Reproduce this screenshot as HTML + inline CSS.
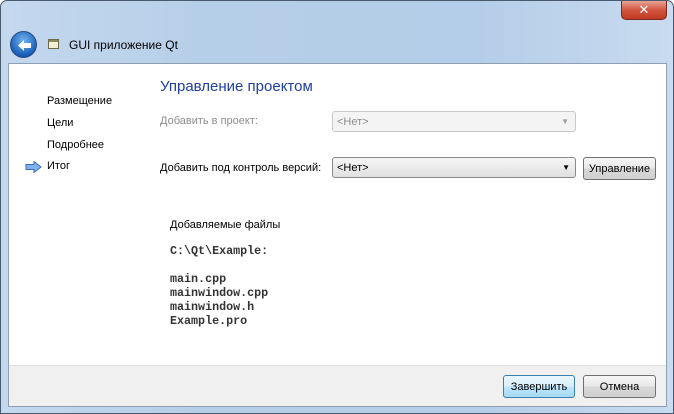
<!DOCTYPE html>
<html><head><meta charset="utf-8"><style>
*{margin:0;padding:0;box-sizing:border-box}
body{width:674px;height:414px;overflow:hidden;background:#fff;font-family:"Liberation Sans","DejaVu Sans",sans-serif;font-size:11px;color:#000}
.win{position:absolute;left:0;top:0;width:674px;height:414px;border:1px solid #4a5a6e;border-radius:7px 7px 0 0;background:linear-gradient(90deg,#c4d8ee 0%,#b6cfe8 30%,#b4cde8 70%,#c8dbef 100%)}
.close{position:absolute;left:620px;top:0;width:46px;height:19px;border:1px solid #7a2a20;border-top:none;border-radius:0 0 5px 5px;background:linear-gradient(#e8a494,#d2553f 50%,#c03a22);color:#fff;font-weight:bold;font-size:13px;text-align:center;line-height:18px}
.back{position:absolute;left:9px;top:30px;width:27px;height:27px;border-radius:50%;background:radial-gradient(circle at 50% 35%,#6fb4f0,#1a5fb8 70%,#0d3e86);border:1px solid #274a80}
.ico{position:absolute;left:47px;top:38px;width:11px;height:10px;border:1px solid #6b6b4a;background:#f4f0d8}
.ico:before{content:"";position:absolute;left:0;top:0;right:0;height:2px;background:#8d8a54}
.title{position:absolute;left:68px;top:37px;font-size:12px;color:#000}
.content{position:absolute;left:7px;top:62px;width:659px;height:344px;background:#fff;border:1px solid #8e9fb4}
.foot{position:absolute;left:0;bottom:0;width:100%;height:41px;background:#f0f0f0;border-top:1px solid #dfdfdf}
.side{position:absolute;left:47px;font-size:11px}
.h{position:absolute;left:160px;top:78px;font-size:15px;color:#1e3f9c}
.lbl{position:absolute;font-size:11px}
.combo{position:absolute;height:21px;border:1px solid #8a8a8a;border-radius:3px;background:linear-gradient(#f6f6f6,#e0e0e0);padding-left:4px;line-height:20px;font-size:11px}
.btn{position:absolute;height:23px;border:1px solid #707070;border-radius:3px;background:linear-gradient(#f6f6f6 0%,#e8e8e8 50%,#d8d8d8 51%,#d0d0d0);text-align:center;line-height:22px;font-size:11px}
.mono{position:absolute;left:170px;font-family:"Liberation Mono",monospace;font-size:11.7px;font-weight:bold;color:#333;line-height:14px}
</style></head><body>
<div class="win">
<div class="close">✕</div>
<div class="back"><svg width="27" height="27" viewBox="0 0 27 27"><path d="M7 13.5 L13 8 L13 11 L20 11 L20 16 L13 16 L13 19 Z" fill="#fff"/></svg></div>
<div class="ico"></div>
<div class="title">GUI приложение Qt</div>
<div class="content"><div class="foot"></div></div>
</div>
<div class="side" style="top:95px">Размещение</div>
<div class="side" style="top:117px">Цели</div>
<div class="side" style="top:139px">Подробнее</div>
<div class="side" style="top:160px">Итог</div>
<svg style="position:absolute;left:25px;top:161px" width="17" height="12" viewBox="0 0 17 12"><path d="M1 3.5 H9 V0.5 L16 6 L9 11.5 V8.5 H1 Z" fill="#7fb2ea" stroke="#3a6fb8"/></svg>
<div class="h">Управление проектом</div>
<div class="lbl" style="left:160px;top:115px;color:#8d8d8d">Добавить в проект:</div>
<div class="combo" style="left:332px;top:111px;width:244px;background:#f4f4f4;border-color:#c8c8c8;color:#8d8d8d">&lt;Нет&gt;<span style="position:absolute;right:6px;top:0;font-size:8px;color:#a0a0a0">▼</span></div>
<div class="lbl" style="left:160px;top:162px">Добавить под контроль версий:</div>
<div class="combo" style="left:332px;top:157px;width:244px">&lt;Нет&gt;<span style="position:absolute;right:5px;top:0;font-size:8px">▼</span></div>
<div class="btn" style="left:583px;top:157px;width:73px">Управление</div>
<div class="lbl" style="left:170px;top:219px">Добавляемые файлы</div>
<div class="mono" style="top:244px">C:\Qt\Example:</div>
<div class="mono" style="top:272px">main.cpp<br>mainwindow.cpp<br>mainwindow.h<br>Example.pro</div>
<div class="btn" style="left:503px;top:375px;width:72px;border-color:#3c7fb1;background:linear-gradient(#eaf6fd,#d9f0fc 50%,#bee6fd 51%,#a7d9f5)">Завершить</div>
<div class="btn" style="left:583px;top:375px;width:73px">Отмена</div>
</body></html>
